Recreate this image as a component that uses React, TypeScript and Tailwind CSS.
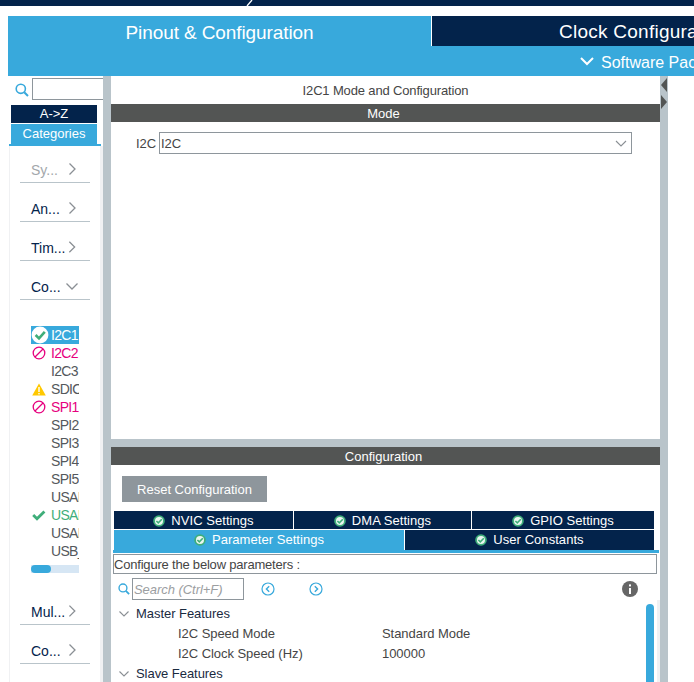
import React from "react";

const Chevron = ({ dir = "right", className = "" }: { dir?: "right" | "down"; className?: string }) => (
  <svg width="14" height="14" viewBox="0 0 14 14" className={className} fill="none" stroke="#8a8f94" strokeWidth="1.3">
    {dir === "right" ? <path d="M4.5 1.5 L10 7 L4.5 12.5" /> : <path d="M1.5 4.5 L7 10 L12.5 4.5" />}
  </svg>
);

const TabCheck = () => (
  <svg width="12" height="12" viewBox="0 0 12 12" className="shrink-0">
    <circle cx="6" cy="6" r="5.8" fill="#3fae7a" />
    <circle cx="6" cy="6" r="4" fill="#eaf6f0" />
    <path d="M3.4 6 L5.3 7.9 L8.8 4.2" fill="none" stroke="#3fae7a" strokeWidth="1.6" />
  </svg>
);

const Ban = () => (
  <svg width="14" height="14" viewBox="0 0 14 14" className="ml-px">
    <circle cx="7" cy="7" r="5.8" fill="none" stroke="#e6007e" strokeWidth="1.3" />
    <path d="M3 11 L11 3" stroke="#e6007e" strokeWidth="1.3" />
  </svg>
);

const CheckWhite = () => (
  <svg width="18" height="18" viewBox="0 0 18 18">
    <circle cx="9" cy="9" r="8.4" fill="#ffffff" />
    <path d="M4.6 9 L8 12.4 L13.8 5.8" fill="none" stroke="#3fae7a" strokeWidth="2.6" />
  </svg>
);

const GreenCheck = () => (
  <svg width="14" height="14" viewBox="0 0 14 14" className="ml-px">
    <path d="M1.2 7 L5 10.8 L12.4 3.4" fill="none" stroke="#3fae7a" strokeWidth="2.8" />
  </svg>
);

const Warn = () => (
  <svg width="14" height="13" viewBox="0 0 14 13" className="ml-px">
    <path d="M7 0.5 L13.8 12.6 L0.2 12.6 Z" fill="#ffc800" />
    <rect x="6.3" y="4" width="1.4" height="5" fill="#ffffff" />
    <rect x="6.3" y="10" width="1.4" height="1.4" fill="#ffffff" />
  </svg>
);

const SearchIcon = ({ size = 14 }: { size?: number }) => (
  <svg width={size} height={size} viewBox="0 0 14 14" fill="none" stroke="#38a9dc" strokeWidth="1.6" className="shrink-0">
    <circle cx="5.8" cy="5.8" r="4.6" />
    <path d="M9.2 9.2 L13 13" strokeWidth="2" />
  </svg>
);

const CircleArrow = ({ left }: { left?: boolean }) => (
  <svg width="14" height="14" viewBox="0 0 14 14" fill="none" stroke="#38a9dc" strokeWidth="1.2">
    <circle cx="7" cy="7" r="6" />
    <path d={left ? "M8.2 4.2 L5.4 7 L8.2 9.8" : "M5.8 4.2 L8.6 7 L5.8 9.8"} strokeWidth="1.4" />
  </svg>
);

const CategoryRow = ({ label, open, muted }: { label: string; open?: boolean; muted?: boolean }) => (
  <div className="ml-[10px] flex h-[33px] w-[70px] items-center justify-between border-b border-[#b9c4ca] pl-[11px] pr-[11px] pt-[8px]">
    <span className={`text-[14px] ${muted ? "text-[#a3a7ab]" : "text-[#03234b]"}`}>{label}</span>
    <Chevron dir={open ? "down" : "right"} className="mb-[3px]" />
  </div>
);

const items: { t: string; c?: string; i?: React.ReactNode; sel?: boolean }[] = [
  { t: "I2C1", c: "text-white", i: <CheckWhite />, sel: true },
  { t: "I2C2", c: "text-[#e6007e]", i: <Ban /> },
  { t: "I2C3" },
  { t: "SDIO", i: <Warn /> },
  { t: "SPI1", c: "text-[#e6007e]", i: <Ban /> },
  { t: "SPI2" },
  { t: "SPI3" },
  { t: "SPI4" },
  { t: "SPI5" },
  { t: "USART1" },
  { t: "USART2", c: "text-[#3fae7a]", i: <GreenCheck /> },
  { t: "USART3" },
  { t: "USB_OTG_FS" },
];

const Tab = ({ label, active, className = "" }: { label: string; active?: boolean; className?: string }) => (
  <div
    className={`flex items-center justify-center gap-[6px] text-[13px] tracking-[0.05px] text-white ${
      active ? "bg-[#38a9dc]" : "bg-[#03234b]"
    } ${className}`}
  >
    <TabCheck />
    <span>{label}</span>
  </div>
);

export default function App() {
  return (
    <div className="flex h-[682px] w-[694px] flex-col overflow-hidden bg-white font-['Liberation_Sans',Arial,sans-serif] text-[#454545]">
      {/* top strip */}
      <div className="flex h-[6px] shrink-0 items-start overflow-hidden bg-[#03234b] pl-[246px]">
        <svg width="8" height="6" viewBox="0 0 8 6">
          <path d="M1 6 L6 0" stroke="#ffffff" strokeWidth="1.3" />
        </svg>
      </div>
      <div className="h-[10px] shrink-0" />

      {/* header */}
      <div className="ml-[8px] flex h-[60px] shrink-0 bg-[#38a9dc]">
        <div className="flex h-[34px] w-[423px] shrink-0 items-center justify-center text-[19px] tracking-[-0.1px] text-white">
          Pinout &amp; Configuration
        </div>
        <div className="flex min-w-0 flex-1 flex-col">
          <div className="flex h-[30px] shrink-0 items-center overflow-hidden whitespace-nowrap border-l border-white bg-[#03234b] pl-[127px] pt-[3px] text-[19px] tracking-[0.25px] text-white">
            Clock Configuration
          </div>
          <div className="flex h-[30px] items-center gap-[7px] overflow-hidden whitespace-nowrap pl-[149px] pt-[3px] text-[16px] text-white">
            <svg width="14" height="9" viewBox="0 0 14 9" fill="none" stroke="#ffffff" strokeWidth="2" className="mb-[3px] shrink-0">
              <path d="M1 1 L7 7 L13 1" />
            </svg>
            Software Packs
          </div>
        </div>
      </div>

      {/* body */}
      <div className="ml-[8px] flex min-h-0 flex-1">
        {/* sidebar */}
        <div className="flex w-[95px] shrink-0 flex-col overflow-hidden">
          <div className="flex h-[29px] shrink-0 items-start gap-[3px] pl-[7px] pt-[2px]">
            <div className="pt-[5px]">
              <SearchIcon />
            </div>
            <div className="h-[22px] flex-1 border border-r-0 border-[#8e969c] bg-white" />
          </div>
          <div className="ml-[3px] flex h-[18px] w-[86px] shrink-0 items-center justify-center bg-[#03234b] text-[13px] text-white">
            A-&gt;Z
          </div>
          <div className="ml-[3px] mt-px flex h-[20px] w-[86px] shrink-0 items-center justify-center bg-[#38a9dc] text-[13px] text-white">
            Categories
          </div>
          <div className="ml-px h-[2px] w-[92px] shrink-0 bg-[#38a9dc]" />
          <div className="ml-px flex w-[94px] flex-1 flex-col border-l border-r-[3px] border-[#f0f1f3] pt-[4px]">
            <div className="flex flex-col gap-[6px]">
              <CategoryRow label="Sy..." muted />
              <CategoryRow label="An..." />
              <CategoryRow label="Tim..." />
              <CategoryRow label="Co..." open />
            </div>
            <div className="ml-[21px] mt-[26px] flex w-[48px] flex-col">
              {items.map((it) => (
                <div
                  key={it.t}
                  className={`flex h-[18px] items-center overflow-hidden whitespace-nowrap text-[14px] tracking-[-0.7px] ${it.sel ? "bg-[#38a9dc]" : ""} ${it.c ?? "text-[#54585c]"}`}
                >
                  <span className="flex w-[20px] shrink-0 items-center justify-start">{it.i}</span>
                  <span>{it.t}</span>
                </div>
              ))}
              <div className="mt-[5px] h-[8px] w-[48px] bg-[#d6e6f4]">
                <div className="h-[8px] w-[20px] rounded-full bg-[#38a9dc]" />
              </div>
            </div>
            <div className="mt-[19px] flex flex-col gap-[6px]">
              <CategoryRow label="Mul..." />
              <CategoryRow label="Co..." />
            </div>
          </div>
        </div>

        {/* left divider */}
        <div className="w-[8px] shrink-0 bg-[#b9c4ca]" />

        {/* main */}
        <div className="flex w-[549px] shrink-0 flex-col bg-[#b9c4ca]">
          <div className="flex h-[363px] shrink-0 flex-col bg-white">
            <div className="flex h-[28px] shrink-0 items-center justify-center pt-px text-[13px] tracking-[-0.15px]">
              I2C1 Mode and Configuration
            </div>
            <div className="flex h-[18px] shrink-0 items-center justify-center bg-[#535554] pr-[4px] pt-px text-[13px] text-white">Mode</div>
            <div className="mt-[10px] flex items-center pl-[25px]">
              <span className="w-[23px] pt-px text-[13px]">I2C</span>
              <div className="flex h-[22px] w-[473px] items-center justify-between border border-[#8e969c] pl-px pr-[4px] pt-px text-[13px]">
                <span>I2C</span>
                <svg width="12" height="7" viewBox="0 0 12 7" fill="none" stroke="#8a8f94" strokeWidth="1.1">
                  <path d="M1 1 L6 6 L11 1" />
                </svg>
              </div>
            </div>
          </div>
          <div className="mt-[8px] flex h-[235px] min-h-0 flex-1 flex-col overflow-hidden bg-white">
            <div className="flex h-[18px] shrink-0 items-center justify-center bg-[#535554] pr-[4px] pt-px text-[13px] text-white">Configuration</div>
            <div className="ml-[11px] mt-[11px] flex h-[26px] w-[145px] shrink-0 items-center justify-center bg-[#8e969c] pt-px text-[13px] text-white">
              Reset Configuration
            </div>
            <div className="ml-[3px] mt-[9px] flex h-[18px] w-[540px] shrink-0 gap-px">
              <Tab label="NVIC Settings" className="w-[179px] pt-px" />
              <Tab label="DMA Settings" className="w-[177px] pt-px" />
              <Tab label="GPIO Settings" className="flex-1 pt-px" />
            </div>
            <div className="ml-[3px] mt-px flex h-[20px] w-[540px] shrink-0 gap-px">
              <Tab label="Parameter Settings" active className="w-[290px]" />
              <Tab label="User Constants" className="flex-1" />
            </div>
            <div className="ml-[2px] h-[3px] w-[546px] shrink-0 bg-[#38a9dc]" />
            <div className="ml-[2px] mt-px flex h-[20px] w-[544px] shrink-0 items-center border border-[#8e969c] pt-px text-[13px] tracking-[-0.2px]">
              Configure the below parameters :
            </div>
            <div className="mt-[4px] flex h-[22px] shrink-0 items-center pl-[7px]">
              <SearchIcon size={12} />
              <div className="ml-[2px] flex h-[22px] w-[112px] items-center border border-[#8e969c] pl-px pt-px text-[13px] italic tracking-[-0.05px] text-[#9b9ea1]">
                Search (Ctrl+F)
              </div>
              <div className="ml-[17px]">
                <CircleArrow left />
              </div>
              <div className="ml-[34px]">
                <CircleArrow />
              </div>
              <svg width="16" height="16" viewBox="0 0 16 16" className="ml-[299px]">
                <circle cx="8" cy="8" r="8" fill="#666666" />
                <rect x="7" y="7" width="2" height="6" fill="#ffffff" />
                <rect x="7" y="3.4" width="2" height="2" fill="#ffffff" />
              </svg>
            </div>
            <div className="flex min-h-0 flex-1">
              <div className="flex w-[535px] shrink-0 flex-col pt-[4px] text-[13px] tracking-[-0.05px]">
                <div className="flex h-[20px] items-center pl-[8px]">
                  <svg width="10" height="6" viewBox="0 0 10 6" fill="none" stroke="#8a8f94" strokeWidth="1.1" className="mr-[7px]">
                    <path d="M0.5 0.5 L5 5 L9.5 0.5" />
                  </svg>
                  <span className="text-[#1a2a3f]">Master Features</span>
                </div>
                <div className="flex h-[20px] items-center pl-[67px]">
                  <span className="w-[204px]">I2C Speed Mode</span>
                  <span>Standard Mode</span>
                </div>
                <div className="flex h-[20px] items-center pl-[67px] pt-px">
                  <span className="w-[204px]">I2C Clock Speed (Hz)</span>
                  <span>100000</span>
                </div>
                <div className="flex h-[20px] items-center pl-[8px] pt-px">
                  <svg width="10" height="6" viewBox="0 0 10 6" fill="none" stroke="#8a8f94" strokeWidth="1.1" className="mr-[7px]">
                    <path d="M0.5 0.5 L5 5 L9.5 0.5" />
                  </svg>
                  <span className="text-[#1a2a3f]">Slave Features</span>
                </div>
              </div>
              <div className="mt-[4px] h-[90px] w-[8px] shrink-0 rounded-t-full bg-[#38a9dc]" />
              <div className="ml-[3px] w-[3px] flex-1 bg-[#f0f1f3]" />
            </div>
          </div>
        </div>

        {/* right divider */}
        <div className="flex w-[8px] shrink-0 flex-col items-center bg-[#b9c4ca] pt-[2px]">
          <svg width="8" height="31" viewBox="0 0 8 31">
            <path d="M7 0 L7 14 L1 7 Z" fill="#535554" />
            <path d="M1 17 L7 24 L1 31 Z" fill="#535554" />
          </svg>
        </div>
        <div className="flex-1 bg-white" />
      </div>
    </div>
  );
}
